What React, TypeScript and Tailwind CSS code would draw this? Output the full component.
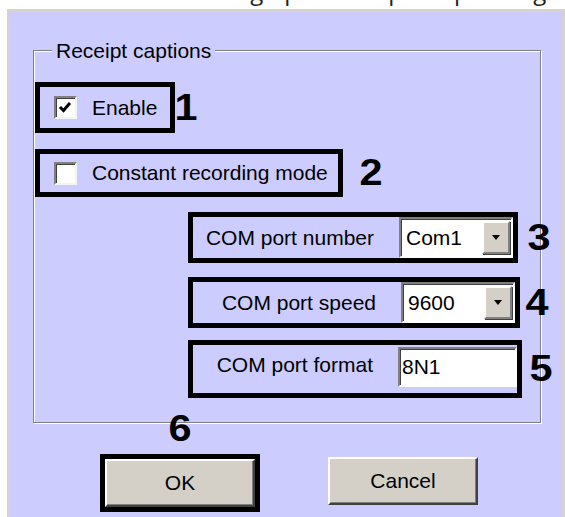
const ui = { fontFamily: '"Liberation Sans", Arial, sans-serif' };

function Annot({ className, children }: { className: string; children?: React.ReactNode }) {
  return <div className={`shrink-0 border-[5px] border-black ${className}`}>{children}</div>;
}

function Num({ n, className = '' }: { n: string; className?: string }) {
  return (
    <span className={`inline-block shrink-0 scale-x-[1.15] text-[36px] font-bold leading-none text-black ${className}`}>{n}</span>
  );
}

function CheckBox({ checked }: { checked?: boolean }) {
  return (
    <div className="h-[23px] w-[23px] shrink-0 border-2 border-t-[#808080] border-l-[#808080] border-r-[#f4f4f4] border-b-[#f4f4f4] bg-white shadow-[inset_1px_1px_0_#404040]">
      {checked && (
        <svg width="19" height="19" viewBox="0 0 19 19">
          <polyline points="4,9 7.5,12.5 14,5" fill="none" stroke="#000" strokeWidth="3" />
        </svg>
      )}
    </div>
  );
}

function Combo({ value }: { value: string }) {
  return (
    <div className="flex h-full w-[114px] shrink-0 border-2 border-t-[#808080] border-l-[#808080] border-r-white border-b-white bg-white shadow-[inset_1px_1px_0_#404040]">
      <div className="flex flex-1 items-center pl-[5px]">{value}</div>
      <div className="my-[2px] mr-[1px] flex w-[28px] items-center justify-center border-2 border-t-white border-l-white border-r-[#808080] border-b-[#808080] bg-[#d4d0c8] shadow-[1px_1px_0_#404040]">
        <div className="h-0 w-0 border-x-[4px] border-t-[5px] border-x-transparent border-t-black" />
      </div>
    </div>
  );
}

function WinButton({ label, className = '' }: { label: string; className?: string }) {
  return (
    <div
      className={`flex h-[48px] w-[150px] items-center justify-center border-2 border-t-white border-l-white border-r-[#404040] border-b-[#404040] bg-[#d4d0c8] shadow-[inset_-1px_-1px_0_#808080] ${className}`}
    >
      {label}
    </div>
  );
}

export default function App() {
  return (
    <div className="h-[517px] w-[565px] overflow-hidden bg-white text-[21px] text-black" style={ui}>
      {/* bottom edge of the page caption above the screenshot */}
      <div className="h-[9px] overflow-hidden pl-[52px]">
        <p className="-mt-[21px] whitespace-nowrap text-[24px] leading-none text-[#222]" style={{ fontFamily: '"Open Sans", sans-serif' }}>
          Window for setting up of receipts captioning
        </p>
      </div>

      <div className="ml-[7px] h-[560px] w-[558px] border-[3px] border-b-0 border-[#d6d3cd] bg-[#ccccff] pt-[38px] pl-[23px]">
        {/* group box */}
        <div className="relative h-[373px] w-[508px] border border-[#808080] shadow-[inset_1px_1px_0_#fff,1px_1px_0_#fff]">
          <span className="absolute -top-[11px] left-[18px] bg-[#ccccff] px-[4px] leading-none">Receipt captions</span>

          <div className="ml-[1px] mt-[31px] flex items-center">
            <Annot className="flex h-[51px] w-[140px] items-center gap-[15px] pl-[14px]">
              <CheckBox checked />
              <span>Enable</span>
            </Annot>
            <Num n="1" className="ml-[1px]" />
          </div>

          <div className="ml-[1px] mt-[16px] flex items-center">
            <Annot className="flex h-[48px] w-[308px] items-center gap-[15px] pl-[14px]">
              <CheckBox />
              <span className="whitespace-nowrap">Constant recording mode</span>
            </Annot>
            <Num n="2" className="ml-[18px]" />
          </div>

          <div className="ml-[154px] mt-[15px] flex items-center">
            <Annot className="flex h-[51px] w-[330px] items-center">
              <div className="flex-1 whitespace-nowrap pr-[25px] text-right">COM port number</div>
              <Combo value="Com1" />
            </Annot>
            <Num n="3" className="ml-[11px]" />
          </div>

          <div className="ml-[154px] mt-[14px] flex items-center">
            <Annot className="flex h-[51px] w-[332px] items-center">
              <div className="flex-1 whitespace-nowrap pr-[25px] text-right">COM port speed</div>
              <Combo value="9600" />
            </Annot>
            <Num n="4" className="ml-[7px]" />
          </div>

          <div className="ml-[154px] mt-[12px] flex items-center">
            <Annot className="flex h-[58px] w-[334px] items-start">
              <div className="mt-[9px] flex-1 whitespace-nowrap pr-[25px] text-right leading-none">COM port format</div>
              <div className="mt-[2px] flex h-[40px] w-[119px] shrink-0 items-center border-2 border-t-[#808080] border-l-[#808080] border-r-white border-b-white bg-white pl-[2px] shadow-[inset_1px_1px_0_#404040]">
                8N1
              </div>
            </Annot>
            <Num n="5" className="ml-[9px]" />
          </div>
        </div>

        {/* buttons */}
        <div className="-mt-[12px] flex items-start pl-[67px]">
          <div className="flex flex-col items-center">
            <Num n="6" />
            <Annot className="mt-[7px] h-[58px] w-[160px]">
              <WinButton label="OK" />
            </Annot>
          </div>
          <WinButton label="Cancel" className="ml-[68px] mt-[46px]" />
        </div>
      </div>
    </div>
  );
}
